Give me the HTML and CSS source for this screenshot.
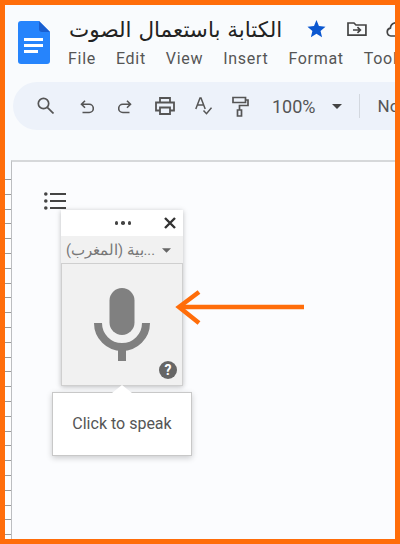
FILE: index.html
```html
<!DOCTYPE html>
<html lang="en">
<head>
    <meta charset="UTF-8">
    <title>Voice typing</title>
    <link rel="stylesheet" href="styles.css">
</head>
<body>

<div class="frame">
    <header class="top">
        <svg class="logo" width="32" height="43" viewBox="0 0 32 43">
            <path d="M3 0H21L32 11V40a3 3 0 0 1-3 3H3a3 3 0 0 1-3-3V3a3 3 0 0 1 3-3z" fill="#2684fc"/>
            <path d="M21 0L32 11H24a3 3 0 0 1-3-3z" fill="#1a5fd0"/>
            <path d="M6 17H25V20H6zM6 23H25V26H6zM6 29H20V32H6z" fill="#fff"/>
        </svg>
        <div class="titles">
            <div class="title-row">
                <span class="title" lang="ar" dir="rtl">الكتابة باستعمال الصوت</span>
                <svg class="star" width="19" height="18" viewBox="0 0 20 19">
                    <path d="M10 0l2.600 6.400 6.900.6-5.200 4.500 1.600 6.700L10 14.600l-5.900 3.600 1.600-6.700L.5 7l6.900-.6z" fill="#0b57d0"/>
                </svg>
                <svg class="folder" width="20" height="16" viewBox="0 0 20 16" fill="none" stroke="#444" stroke-width="1.7">
                    <path d="M1 14.200V2h6l2 2h10v10.200z"/>
                    <path d="M6 9h7M10.500 6.200L13.400 9l-2.900 2.800"/>
                </svg>
                <svg class="cloud" width="22" height="16" viewBox="0 0 22 16" fill="none" stroke="#444" stroke-width="1.7">
                    <path d="M5 15a4 4 0 0 1-.6-7.900A6 6 0 0 1 16 5.500a4.800 4.800 0 0 1 1 9.500z"/>
                </svg>
            </div>
            <nav class="menu">
                <span>File</span>
                <span>Edit</span>
                <span>View</span>
                <span>Insert</span>
                <span>Format</span>
                <span>Tools</span>
            </nav>
        </div>
    </header>

    <div class="toolbar">
        <svg class="tool t-search" width="17" height="17" viewBox="0 0 17 17" fill="none" stroke="#555" stroke-width="1.700">
            <circle cx="6.500" cy="6.500" r="5.200"/>
            <path d="M10.300 10.300l6.200 6.200"/>
        </svg>
        <svg class="tool t-undo" width="14" height="14" viewBox="0 0 14 14" fill="none" stroke="#555" stroke-width="1.600">
            <path d="M5 .8L1.500 4.300 5 7.800M1.500 4.300h7.700a3.900 3.900 0 0 1 0 8.200H2.500"/>
        </svg>
        <svg class="tool t-redo" width="14" height="14" viewBox="0 0 14 14" fill="none" stroke="#555" stroke-width="1.600">
            <path d="M9 .8l3.500 3.500L9 7.800M12.500 4.300H4.800a3.900 3.900 0 0 0 0 8.200h6.700"/>
        </svg>
        <svg class="tool t-print" width="20" height="18" viewBox="0 0 20 18" fill="none" stroke="#555" stroke-width="1.800">
            <path d="M5 5V1h10v4M5 13.500H1V5.500h18v8h-4"/>
            <path d="M5 10.500h10V17H5z"/>
        </svg>
        <svg class="tool t-spell" width="17" height="18" viewBox="0 0 17 18" fill="none" stroke="#555" stroke-width="1.500">
            <path d="M.8 12L5 1h1l4.200 11M2.400 8h6.200"/>
            <path d="M8.500 13.500l3 3.200 5-6"/>
        </svg>
        <svg class="tool t-paint" width="17" height="21" viewBox="0 0 17 21" fill="none" stroke="#555" stroke-width="1.700">
            <path d="M1 1.500h12.500v5H1zM13.500 4H16v5.500H7.500V14"/>
            <path d="M5.500 14h4v6h-4z"/>
        </svg>
        <span class="zoom">100%</span>
        <svg class="caret" width="10" height="5" viewBox="0 0 10 5"><path d="M0 0h10L5 5z" fill="#444"/></svg>
        <span class="sep"></span>
        <span class="style-name">Normal text</span>
    </div>

    <main class="doc-area">
        <div class="ruler"></div>
        <div class="page">
            <svg class="list-icon" width="22" height="18" viewBox="0 0 22 18" fill="#444">
                <circle cx="1.800" cy="2" r="1.800"/>
                <circle cx="1.800" cy="9" r="1.800"/>
                <circle cx="1.800" cy="16" r="1.800"/>
                <path d="M6 1h16v2H6zM6 8h16v2H6zM6 15h16v2H6z"/>
            </svg>
        </div>
    </main>

    <div class="voice">
        <div class="voice-head">
            <span class="dots"><i></i><i></i><i></i></span>
            <svg class="close" width="12" height="12" viewBox="0 0 12 12"><path d="M1 1l10 10M11 1L1 11" stroke="#333" stroke-width="2.400"/></svg>
        </div>
        <div class="voice-lang">
            <span class="lang-name" lang="ar" dir="rtl">...بية (المغرب)</span>
            <svg width="9" height="5" viewBox="0 0 10 5"><path d="M0 0h10L5 5z" fill="#666"/></svg>
        </div>
        <div class="voice-mic">
            <svg class="mic" width="56" height="76" viewBox="0 0 56 76">
                <rect x="15.500" y="0" width="25" height="47" rx="12.500" fill="#808080"/>
                <path d="M4 35a24 24 0 0 0 48 0" fill="none" stroke="#808080" stroke-width="8"/>
                <path d="M24 58h8v15h-8z" fill="#808080"/>
            </svg>
            <span class="help">?</span>
        </div>
    </div>

    <div class="tip">
        Click to speak
    </div>

    <svg class="arrow" width="135" height="38" viewBox="0 0 135 38" fill="none" stroke="#ff6d0a" stroke-width="4.500">
        <path d="M4 19H129"/>
        <path d="M24 4L4 19l20 16"/>
    </svg>
</div>

</body>
</html>
```

FILE: styles.css
```css
* {
    box-sizing: border-box;
}

body {
    margin: 0;
    font-family: Roboto, "Noto Sans", sans-serif;
}

.frame {
    position: relative;
    width: 400px;
    height: 544px;
    border: 5px solid #ff6d0a;
    background-color: #f9fbfd;
    overflow: hidden;
    display: flex;
    flex-direction: column;
}

/* header */
.top {
    display: flex;
    flex: none;
    height: 77px;
    padding: 16px 0 0 13px;
    gap: 18px;
}

.logo {
    flex: none;
}

.titles {
    flex: none;
    width: 340px;
    margin-top: -6px;
}

.title-row {
    display: flex;
    align-items: center;
    height: 28px;
}

.title {
    width: 215px;
    font-family: "DejaVu Sans", "Noto Sans", sans-serif;
    font-size: 21.500px;
    color: #222;
    white-space: nowrap;
}

.star {
    margin-left: 25px;
}

.folder {
    margin-left: 21px;
}

.cloud {
    margin-left: 19px;
}

.menu {
    display: flex;
    gap: 20px;
    margin-top: 6px;
    font-size: 16px;
    letter-spacing: 0.7px;
    color: #555;
    white-space: nowrap;
}

/* toolbar */
.toolbar {
    display: flex;
    flex: none;
    align-items: center;
    width: 420px;
    height: 48px;
    margin-left: 8px;
    padding-left: 24px;
    background-color: #edf2fa;
    border-radius: 24px;
    white-space: nowrap;
}

.tool {
    flex: none;
}

.t-search {
    margin-top: -2px;
}

.t-undo {
    margin-left: 26px;
    margin-top: 2px;
}

.t-redo {
    margin-left: 24px;
    margin-top: 2px;
}

.t-print {
    margin-left: 23px;
    margin-top: -1px;
}

.t-spell {
    margin-left: 20px;
    margin-top: -1px;
}

.t-paint {
    margin-left: 20px;
    margin-top: 1px;
}

.zoom {
    margin-left: 23px;
    font-size: 18px;
    color: #555;
}

.caret {
    flex: none;
    margin-left: 16px;
}

.sep {
    flex: none;
    width: 1px;
    height: 24px;
    margin-left: 17px;
    background-color: #d3d8df;
}

.style-name {
    margin-left: 18px;
    font-size: 17px;
    color: #555;
}

/* document */
.doc-area {
    display: flex;
    flex: 1;
    margin-top: 30px;
}

.ruler {
    flex: none;
    width: 6px;
    margin-top: 19px;
    background-color: #fdfdfd;
    background-image: repeating-linear-gradient(#999 0, #999 1px, #fdfdfd 1px, #fdfdfd 14.800px);
}

.page {
    flex: 1;
    padding: 30px 0 0 32px;
    background-color: #fbfcfe;
    border-top: 2px solid #d6d8da;
    border-left: 1px solid #bcbec1;
}

/* voice typing panel, floats over the page */
.voice {
    position: absolute;
    left: 56px;
    top: 205px;
    width: 122px;
    box-shadow: 0 1px 5px rgba(0, 0, 0, 0.25);
}

.voice-head {
    display: flex;
    align-items: center;
    justify-content: flex-end;
    height: 26px;
    padding-right: 7px;
    background-color: #fff;
}

.dots {
    display: flex;
    gap: 3px;
    margin-right: 33px;
}

.dots i {
    width: 3.500px;
    height: 3.500px;
    border-radius: 50%;
    background-color: #444;
}

.voice-lang {
    display: flex;
    align-items: center;
    gap: 7px;
    height: 28px;
    padding-left: 7px;
    background-color: #f1f1f1;
}

.lang-name {
    width: 87px;
    font-size: 14.500px;
    color: #777;
    white-space: nowrap;
}

.voice-mic {
    position: relative;
    display: flex;
    justify-content: center;
    height: 123px;
    margin-top: -1px;
    padding-top: 24px;
    background-color: #f1f1f1;
    border: 1px solid #cfcfcf;
}

.help {
    position: absolute;
    right: 5px;
    bottom: 6px;
    width: 18px;
    height: 18px;
    border-radius: 50%;
    background-color: #666;
    color: #fff;
    font-size: 14px;
    font-weight: 700;
    line-height: 18px;
    text-align: center;
}

.tip {
    position: absolute;
    left: 47px;
    top: 387px;
    width: 140px;
    height: 64px;
    padding-top: 21px;
    background-color: #fff;
    border: 1px solid #c8c8c8;
    box-shadow: 0 2px 6px rgba(0, 0, 0, 0.2);
    font-size: 16px;
    color: #555;
    text-align: center;
}

.tip::before {
    content: "";
    position: absolute;
    left: 59px;
    top: -8px;
    width: 0;
    height: 0;
    border-left: 10px solid transparent;
    border-right: 10px solid transparent;
    border-bottom: 8px solid #fff;
}

.arrow {
    position: absolute;
    left: 170px;
    top: 283px;
}
```
